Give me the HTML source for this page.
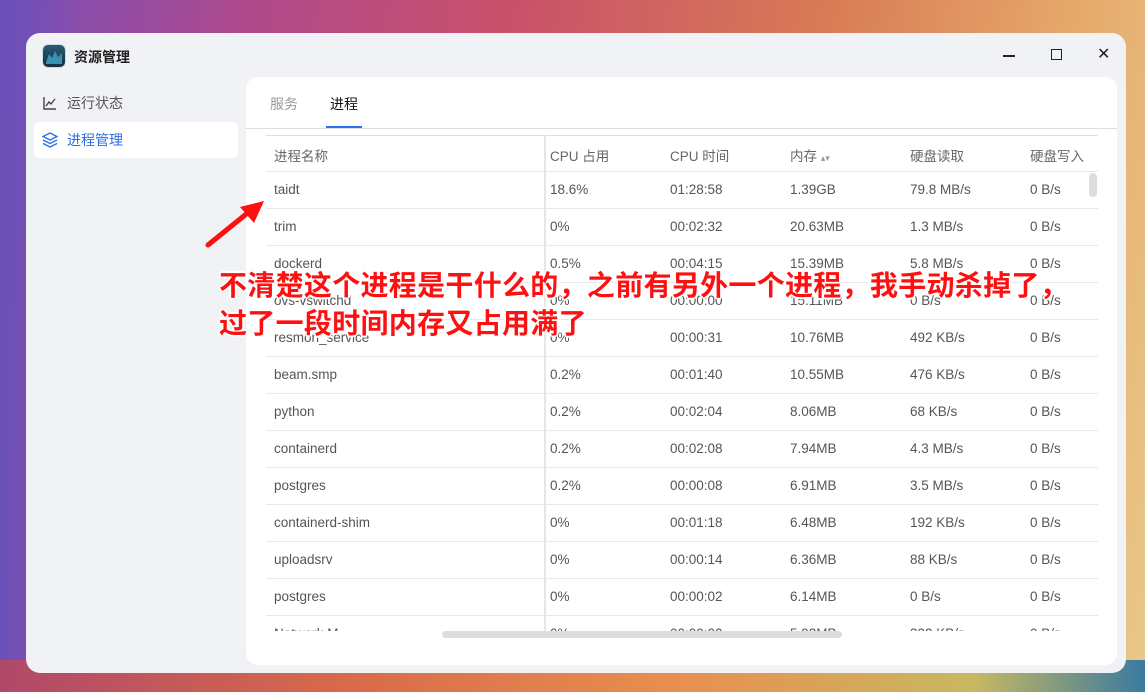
<!DOCTYPE html>
<html><head><meta charset="utf-8"><style>
*{margin:0;padding:0;box-sizing:border-box}
body{width:1145px;height:692px;overflow:hidden;position:relative;font-family:"Liberation Sans","Noto Sans CJK SC",sans-serif;
background:linear-gradient(100deg,#7a4fb8 0%,#b04a8c 20%,#c8506a 40%,#d87a55 65%,#e6a86a 85%,#e8c98a 100%);}
.bl{position:absolute;left:0;top:0;width:80px;height:692px;background:linear-gradient(90deg,#6a50b8,rgba(122,79,184,0))}
.bot{position:absolute;left:0;top:660px;width:1145px;height:32px;background:linear-gradient(90deg,#b0486a,#d86a4a 30%,#e89050 60%,#c8b860 85%,#3a7aa0)}
.win{position:absolute;left:26px;top:33px;width:1100px;height:640px;background:#f0f2f5;border-radius:14px;overflow:hidden}
.title{position:absolute;left:48px;top:47px;font-size:14px;color:#222;font-weight:bold}
.logo{position:absolute;left:43px;top:45px;width:22px;height:22px;border-radius:5px;background:linear-gradient(#2a5a70,#153040);box-shadow:0 0 0 1px #cfd8e8}
.ctl{position:absolute;top:44px;font-size:16px;color:#222}
.nav{position:absolute;left:34px;width:204px;height:36px;border-radius:6px;font-size:14px;color:#555;padding-left:33px;line-height:36px}
.panel{position:absolute;left:246px;top:77px;width:871px;height:588px;background:#fff;border-radius:12px;overflow:hidden}
.tab{position:absolute;top:94px;font-size:14px}
.tbl{position:absolute;left:266px;top:135px;width:832px;height:496px;overflow:hidden}
.row{position:absolute;left:0;width:832px;height:37px;border-bottom:1px solid #e8e8e8;font-size:13.5px;color:#555}
.row span{position:absolute;top:10px}
.note{position:absolute;left:219px;font-size:28px;font-weight:bold;color:#ff1010;letter-spacing:0.3px;white-space:nowrap;
text-shadow:2px 0 #fff,-2px 0 #fff,0 2px #fff,0 -2px #fff,1px 1px #fff,-1px -1px #fff,1px -1px #fff,-1px 1px #fff}
</style></head><body>
<div class="bl"></div><div class="bot"></div>
<div class="win"></div>
<div class="logo"><svg width="22" height="22"><path d="M3 17 L6 9 L9 13 L12 6 L15 12 L19 8 L19 19 L3 19Z" fill="#3a90b0"/></svg></div>
<div class="title" style="left:74px">资源管理</div>
<div class="ctl" style="left:1003px;top:55px;width:12px;height:1.5px;background:#222"></div>
<div class="ctl" style="left:1051px;top:49px;width:11px;height:11px;border:1.5px solid #222"></div>
<div class="ctl" style="left:1097px;top:44px">✕</div>
<div class="nav" style="top:85px"><svg style="position:absolute;left:9px;top:11px" width="14" height="14" fill="none" stroke="#444" stroke-width="1.4"><path d="M1 1V13H13M3 10L6 6L8 8L12 3"/></svg>运行状态</div>
<div class="nav" style="top:122px;background:#fff;color:#2a6ee8"><svg style="position:absolute;left:8px;top:10px" width="16" height="16" fill="none" stroke="#2a6ee8" stroke-width="1.4"><path d="M8 1L15 4.5L8 8L1 4.5Z M1 8L8 11.5L15 8 M1 11.5L8 15L15 11.5"/></svg>进程管理</div>
<div class="panel"></div>
<div class="tab" style="left:270px;color:#999">服务</div>
<div class="tab" style="left:330px;color:#111">进程</div>
<div style="position:absolute;left:326px;top:126px;width:36px;height:2px;background:#2a6ee8"></div>
<div style="position:absolute;left:246px;top:128px;width:871px;height:1px;background:#ddd"></div>
<div class="tbl">
<div style="position:absolute;left:0;top:0;width:832px;height:1px;background:#e0e0e0"></div>
<div class="row" style="top:0;color:#666"><span style="left:8px">进程名称</span><span style="left:284px">CPU 占用</span><span style="left:404px">CPU 时间</span><span style="left:524px">内存 <small style="color:#999;font-size:9px">▴▾</small></span><span style="left:644px">硬盘读取</span><span style="left:764px">硬盘写入</span></div>
<div class="row" style="top:37px"><span style="left:8px">taidt</span><span style="left:284px">18.6%</span><span style="left:404px">01:28:58</span><span style="left:524px">1.39GB</span><span style="left:644px">79.8 MB/s</span><span style="left:764px">0 B/s</span></div>
<div class="row" style="top:74px"><span style="left:8px">trim</span><span style="left:284px">0%</span><span style="left:404px">00:02:32</span><span style="left:524px">20.63MB</span><span style="left:644px">1.3 MB/s</span><span style="left:764px">0 B/s</span></div>
<div class="row" style="top:111px"><span style="left:8px">dockerd</span><span style="left:284px">0.5%</span><span style="left:404px">00:04:15</span><span style="left:524px">15.39MB</span><span style="left:644px">5.8 MB/s</span><span style="left:764px">0 B/s</span></div>
<div class="row" style="top:148px"><span style="left:8px">ovs-vswitchd</span><span style="left:284px">0%</span><span style="left:404px">00:00:00</span><span style="left:524px">15.11MB</span><span style="left:644px">0 B/s</span><span style="left:764px">0 B/s</span></div>
<div class="row" style="top:185px"><span style="left:8px">resmon_service</span><span style="left:284px">0%</span><span style="left:404px">00:00:31</span><span style="left:524px">10.76MB</span><span style="left:644px">492 KB/s</span><span style="left:764px">0 B/s</span></div>
<div class="row" style="top:222px"><span style="left:8px">beam.smp</span><span style="left:284px">0.2%</span><span style="left:404px">00:01:40</span><span style="left:524px">10.55MB</span><span style="left:644px">476 KB/s</span><span style="left:764px">0 B/s</span></div>
<div class="row" style="top:259px"><span style="left:8px">python</span><span style="left:284px">0.2%</span><span style="left:404px">00:02:04</span><span style="left:524px">8.06MB</span><span style="left:644px">68 KB/s</span><span style="left:764px">0 B/s</span></div>
<div class="row" style="top:296px"><span style="left:8px">containerd</span><span style="left:284px">0.2%</span><span style="left:404px">00:02:08</span><span style="left:524px">7.94MB</span><span style="left:644px">4.3 MB/s</span><span style="left:764px">0 B/s</span></div>
<div class="row" style="top:333px"><span style="left:8px">postgres</span><span style="left:284px">0.2%</span><span style="left:404px">00:00:08</span><span style="left:524px">6.91MB</span><span style="left:644px">3.5 MB/s</span><span style="left:764px">0 B/s</span></div>
<div class="row" style="top:370px"><span style="left:8px">containerd-shim</span><span style="left:284px">0%</span><span style="left:404px">00:01:18</span><span style="left:524px">6.48MB</span><span style="left:644px">192 KB/s</span><span style="left:764px">0 B/s</span></div>
<div class="row" style="top:407px"><span style="left:8px">uploadsrv</span><span style="left:284px">0%</span><span style="left:404px">00:00:14</span><span style="left:524px">6.36MB</span><span style="left:644px">88 KB/s</span><span style="left:764px">0 B/s</span></div>
<div class="row" style="top:444px"><span style="left:8px">postgres</span><span style="left:284px">0%</span><span style="left:404px">00:00:02</span><span style="left:524px">6.14MB</span><span style="left:644px">0 B/s</span><span style="left:764px">0 B/s</span></div>
<div class="row" style="top:481px"><span style="left:8px">Network M</span><span style="left:284px">0%</span><span style="left:404px">00:00:00</span><span style="left:524px">5.92MB</span><span style="left:644px">332 KB/s</span><span style="left:764px">0 B/s</span></div>
<div style="position:absolute;left:278px;top:0;width:2px;height:496px;background:#e6e6e6"></div>
</div>
<div style="position:absolute;left:1089px;top:173px;width:8px;height:24px;border-radius:4px;background:#ddd"></div>
<div style="position:absolute;left:442px;top:631px;width:400px;height:7px;border-radius:4px;background:#ddd"></div>
<svg style="position:absolute;left:200px;top:195px" width="70" height="60"><path d="M8 50 L50 16" stroke="#ff1010" stroke-width="5" stroke-linecap="round"/><path d="M64 6 L40 12 L54 28Z" fill="#ff1010"/></svg>
<div class="note" style="top:264px">不清楚这个进程是干什么的，之前有另外一个进程，我手动杀掉了，</div>
<div class="note" style="top:302px">过了一段时间内存又占用满了</div>
</body></html>
